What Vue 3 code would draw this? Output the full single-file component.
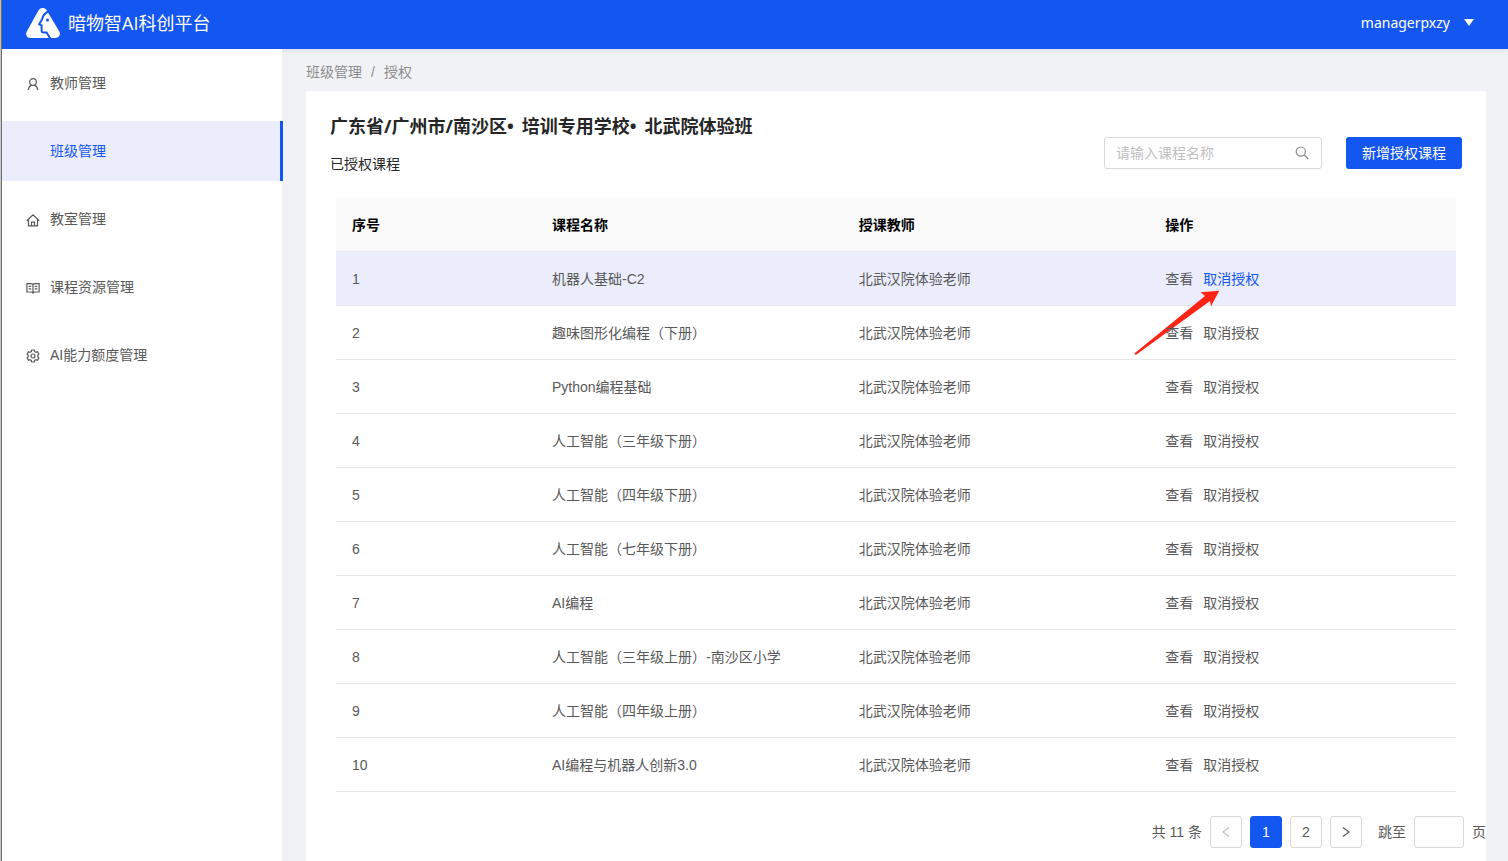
<script setup>
import { ref } from 'vue'

const menu = [
  { key: 'teacher', label: '教师管理' },
  { key: 'class', label: '班级管理' },
  { key: 'room', label: '教室管理' },
  { key: 'course', label: '课程资源管理' },
  { key: 'quota', label: 'AI能力额度管理' }
]
const activeMenu = ref('class')

const courses = [
  '机器人基础-C2',
  '趣味图形化编程（下册）',
  'Python编程基础',
  '人工智能（三年级下册）',
  '人工智能（四年级下册）',
  '人工智能（七年级下册）',
  'AI编程',
  '人工智能（三年级上册）-南沙区小学',
  '人工智能（四年级上册）',
  'AI编程与机器人创新3.0'
]
const teacher = '北武汉院体验老师'
const keyword = ref('')
const jumpPage = ref('')
const page = ref(1)
</script>

<template>
  <div class="app">
    <header class="topbar">
      <div class="brand">
        <svg class="logo" viewBox="0 0 34 30" aria-hidden="true">
          <path fill="#fff" d="M12.600 2.200C14.400-.6 18.600-.6 20.500 2L33.300 23.500C35 26.700 33 30 29.500 30H4.500C1 30-1 26.700.8 23.500Z" />
          <path fill="none" stroke="#1456f0" stroke-width="2" d="M23 3.200C19 4.800 16.800 7.200 16 11.500L13.200 16.300L15.600 17.400V22.500C15.600 24 16.200 24.500 17.500 24.500H20.600L24.300 30.500" />
          <circle cx="21.500" cy="12" r="1.600" fill="#1456f0" />
        </svg>
        <span class="brand-name">暗物智AI科创平台</span>
      </div>
      <button class="user" type="button">
        <span>managerpxzy</span>
        <svg class="caret" viewBox="0 0 10 7" aria-hidden="true"><path fill="#fff" d="M0 0H10L5 7Z" /></svg>
      </button>
    </header>

    <div class="body">
      <nav class="sidebar">
        <a
          v-for="item in menu"
          :key="item.key"
          href="#"
          class="menu-item"
          :class="{ active: item.key === activeMenu }"
          @click.prevent="activeMenu = item.key"
        >
          <svg class="menu-icon" viewBox="0 0 14 14" fill="none" stroke="currentColor" stroke-width="1.200" aria-hidden="true">
            <template v-if="item.key === 'teacher'">
              <circle cx="7" cy="5" r="3.300" />
              <path d="M2.300 13C2.400 10.700 3.700 9 5.400 8.100M11.700 13C11.600 10.700 10.300 9 8.600 8.100" />
            </template>
            <template v-else-if="item.key === 'room'">
              <path d="M.8 7.800L7 1.800L13.200 7.800M2.500 6.500V12.800H11.500V6.500M5.500 12.800V9.200H8.500V12.800" />
            </template>
            <template v-else-if="item.key === 'course'">
              <path d="M7 3.300C6.300 2.700 5.500 2.600 4.500 2.600H.9V11H4.800C5.700 11 6.400 11.300 7 12C7.600 11.300 8.300 11 9.200 11H13.100V2.600H9.500C8.500 2.600 7.700 2.700 7 3.300ZM7 3.300V12M2.700 5.400H5.200M2.700 7.800H5.200M8.800 5.400H11.300M8.800 7.800H11.300" />
            </template>
            <template v-else-if="item.key === 'quota'">
              <path d="M5.300 2.600L5.700 1H8.300L8.700 2.600L10 3.300L11.600 2.800L12.900 5.100L11.700 6.300V7.700L12.900 8.900L11.600 11.200L10 10.700L8.700 11.400L8.300 13H5.700L5.300 11.400L4 10.700L2.400 11.200L1.100 8.900L2.300 7.700V6.300L1.100 5.100L2.400 2.800L4 3.300Z" />
              <circle cx="7" cy="7" r="2" />
            </template>
          </svg>
          <span>{{ item.label }}</span>
        </a>
      </nav>

      <main class="main">
        <div class="crumbs">
          <a href="#">班级管理</a><span class="sep">/</span><span>授权</span>
        </div>

        <section class="card">
          <div class="card-head">
            <div>
              <h1><span>广东省/广州市/南沙区•</span> <span>培训专用学校•</span> <span>北武院体验班</span></h1>
              <p>已授权课程</p>
            </div>
            <div class="tools">
              <label class="search">
                <input v-model="keyword" type="text" placeholder="请输入课程名称" aria-label="课程名称" />
                <svg viewBox="0 0 14 14" fill="none" stroke="#8c8c8c" stroke-width="1.200" aria-hidden="true">
                  <circle cx="5.800" cy="5.600" r="4.600" />
                  <path d="M9.200 9L13.300 13" />
                </svg>
              </label>
              <button class="primary" type="button">新增授权课程</button>
            </div>
          </div>

          <div class="table-wrap">
            <table>
              <thead>
                <tr>
                  <th class="col-no">序号</th>
                  <th>课程名称</th>
                  <th>授课教师</th>
                  <th>操作</th>
                </tr>
              </thead>
              <tbody>
                <tr v-for="(name, i) in courses" :key="i" :class="{ hovered: i === 0 }">
                  <td>{{ i + 1 }}</td>
                  <td>{{ name }}</td>
                  <td>{{ teacher }}</td>
                  <td>
                    <div class="actions">
                      <a href="#">查看</a>
                      <a href="#" :class="{ hot: i === 0 }">取消授权</a>
                      <svg v-if="i === 0" class="arrow" viewBox="0 0 86 66" aria-hidden="true">
                        <path fill="#ff2414" d="M85.300.7L77 16.300L76 10.900L1.800 65L.3 63.600L71 5.900L66.500 2.300Z" />
                      </svg>
                    </div>
                  </td>
                </tr>
              </tbody>
            </table>
          </div>

          <div class="pager">
            <span class="total">共 11 条</span>
            <button type="button" disabled aria-label="上一页">
              <svg viewBox="0 0 10 12" fill="none" stroke="#c0c0c0" stroke-width="1.200"><path d="M8 1.500L2 6L8 10.500" /></svg>
            </button>
            <button type="button" :class="{ current: page === 1 }" @click="page = 1">1</button>
            <button type="button" :class="{ current: page === 2 }" @click="page = 2">2</button>
            <button type="button" aria-label="下一页">
              <svg viewBox="0 0 10 12" fill="none" stroke="#595959" stroke-width="1.200"><path d="M2 1.500L8 6L2 10.500" /></svg>
            </button>
            <label class="jump">跳至<input v-model="jumpPage" type="text" />页</label>
          </div>
        </section>
      </main>
    </div>
  </div>
</template>

<style>
body {
  overflow: hidden;
}
</style>

<style scoped>
.app {
  display: flex;
  flex-direction: column;
  box-sizing: border-box;
  min-height: 100vh;
  border-left: 1px solid #c8c8c8;
  background: #f0f2f6;
  color: #595959;
  font-family: "Liberation Sans", "Noto Sans CJK SC", sans-serif;
  font-size: 14px;
  line-height: 22px;
}
.app *,
.app *::before {
  box-sizing: border-box;
}
a {
  color: inherit;
  text-decoration: none;
}
button,
input {
  font: inherit;
  color: inherit;
}
.topbar {
  display: flex;
  align-items: center;
  justify-content: space-between;
  height: 49px;
  padding: 0 34px 3px 24px;
  border-left: 1px solid #707070;
  background: #1456f0;
  color: #fff;
  font-family: "Open Sans", "Noto Sans CJK SC", sans-serif;
  box-shadow: 0 1px 6px rgba(0, 21, 41, 0.1);
}
.brand {
  display: flex;
  align-items: center;
  gap: 8px;
}
.logo {
  width: 34px;
  height: 30px;
}
.brand-name {
  font-size: 18px;
}
.user {
  display: flex;
  align-items: center;
  gap: 14px;
  padding: 0;
  border: 0;
  background: none;
  font-family: "Noto Sans", sans-serif;
}
.caret {
  width: 10px;
  height: 7px;
  margin-bottom: 2px;
}
.body {
  display: flex;
  flex: 1;
  border-left: 1px solid #707070;
}
.sidebar {
  display: flex;
  flex-direction: column;
  gap: 8px;
  flex: 0 0 280px;
  padding-top: 4px;
  background: #fff;
}
.menu-item {
  display: flex;
  align-items: center;
  gap: 10px;
  height: 60px;
  padding-left: 24px;
}
.menu-icon {
  width: 14px;
  height: 14px;
  margin-top: 2px;
}
.menu-item.active {
  margin-right: -1px;
  border-right: 3px solid #1456f0;
  background: #ebedfd;
  color: #1456f0;
}
.main {
  flex: 1;
  display: flex;
  flex-direction: column;
  min-width: 0;
  padding: 12px 22px 0 24px;
}
.crumbs {
  margin-bottom: 8px;
  color: #8c8c8c;
}
.sep {
  margin: 0 9px;
}
.card {
  flex: 1;
  padding-top: 22px;
  background: #fff;
}
.card-head {
  display: flex;
  align-items: flex-start;
  justify-content: space-between;
  padding: 0 24px;
}
h1 {
  display: flex;
  gap: 8px;
  margin: 0 0 14px;
  color: #262626;
  font-family: "Noto Sans", "Noto Sans CJK SC", sans-serif;
  font-size: 18px;
  font-weight: 700;
  line-height: 26px;
}
p {
  margin: 0;
  color: #262626;
}
.tools {
  display: flex;
  gap: 24px;
  margin-top: 24px;
}
.search {
  display: flex;
  align-items: center;
  width: 218px;
  height: 32px;
  padding: 0 12px 0 11px;
  border: 1px solid #d9d9d9;
  border-radius: 3px;
}
.search input {
  flex: 1;
  min-width: 0;
  padding: 0;
  border: 0;
  outline: 0;
  background: none;
}
.search input::placeholder {
  color: #bfbfbf;
}
.search svg {
  width: 14px;
  height: 14px;
}
.primary {
  height: 32px;
  padding: 0 16px;
  border: 0;
  border-radius: 3px;
  background: #1456f0;
  color: #fff;
}
.table-wrap {
  padding: 23px 30px 0;
}
table {
  width: 100%;
  table-layout: fixed;
  border-collapse: separate;
  border-spacing: 0;
}
.col-no {
  width: 200px;
}
th,
td {
  height: 54px;
  padding: 0 16px;
  border-bottom: 1px solid #e8e8e8;
  text-align: left;
}
th {
  background: #fafafa;
  color: #000;
  font-weight: 700;
}
th:first-child {
  border-top-left-radius: 4px;
}
th:last-child {
  border-top-right-radius: 4px;
}
.hovered td {
  background: #ebedfd;
}
.actions {
  position: relative;
  display: flex;
  gap: 10px;
}
.hot {
  color: #1456f0;
}
.arrow {
  position: absolute;
  top: 22px;
  left: -31px;
  width: 86px;
  height: 66px;
  pointer-events: none;
}
.pager {
  display: flex;
  align-items: center;
  justify-content: flex-end;
  gap: 8px;
  padding: 24px 0 13px;
}
.pager button {
  display: flex;
  align-items: center;
  justify-content: center;
  width: 32px;
  height: 32px;
  padding: 0;
  border: 1px solid #d9d9d9;
  border-radius: 3px;
  background: #fff;
}
.pager button.current {
  border-color: #1456f0;
  background: #1456f0;
  color: #fff;
}
.pager svg {
  width: 10px;
  height: 12px;
}
.jump {
  display: flex;
  align-items: center;
  gap: 8px;
  margin-left: 8px;
}
.jump input {
  width: 50px;
  height: 32px;
  padding: 0 11px;
  border: 1px solid #d9d9d9;
  border-radius: 3px;
}
</style>
